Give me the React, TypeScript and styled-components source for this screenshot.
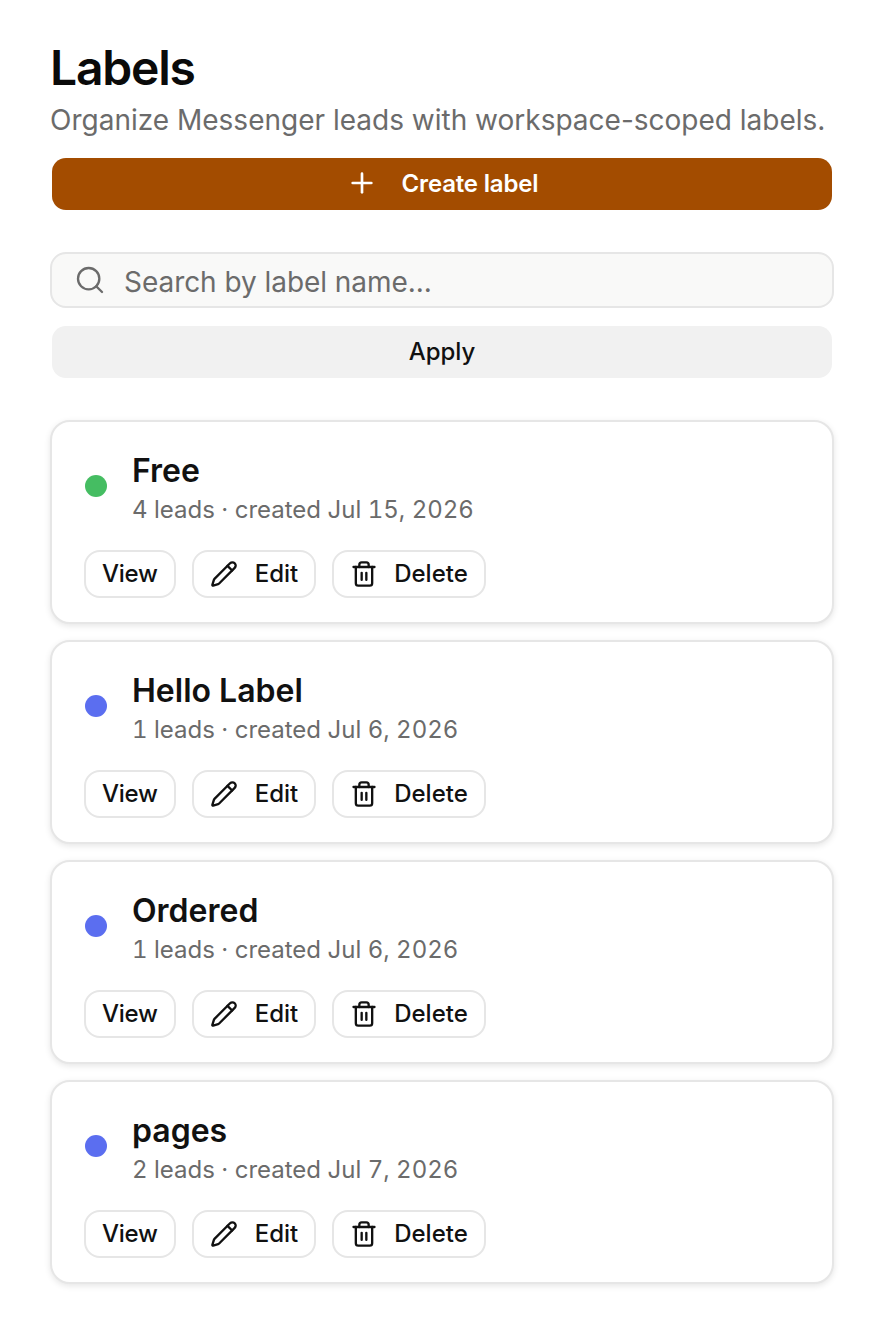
import React from "react";
import styled, { createGlobalStyle } from "styled-components";
import { Pencil, Plus, Search, Trash2 } from "lucide-react";

const GlobalStyle = createGlobalStyle`
  html, body {
    margin: 0;
    padding: 0;
    background: #fff;
    font-family: Inter, "Liberation Sans", sans-serif;
  }
  * { box-sizing: border-box; }
`;

const labels = [
  { name: "Free", color: "#45bd62", meta: "4 leads · created Jul 15, 2026" },
  { name: "Hello Label", color: "#5b6ef0", meta: "1 leads · created Jul 6, 2026" },
  { name: "Ordered", color: "#5b6ef0", meta: "1 leads · created Jul 6, 2026" },
  { name: "pages", color: "#5b6ef0", meta: "2 leads · created Jul 7, 2026" },
];

const Page = styled.main`
  width: 884px;
  padding: 40px 50px 48px;
`;

const Title = styled.h1`
  margin: 0;
  font-size: 48px;
  line-height: 56px;
  font-weight: 600;
  letter-spacing: -1.2px;
  color: #0a0a0a;
`;

const Subtitle = styled.p`
  margin: 4px 0 0;
  font-size: 28px;
  line-height: 40px;
  color: #6b6b6b;
`;

const PrimaryButton = styled.button`
  display: flex;
  align-items: center;
  justify-content: center;
  gap: 24px;
  width: 780px;
  height: 52px;
  margin: 18px 2px 0;
  padding: 0 0 2px;
  border: 0;
  border-radius: 14px;
  background: #a34c00;
  color: #fff;
  font: 600 24px Inter, sans-serif;
  letter-spacing: -0.17px;
`;

const SearchBox = styled.label`
  display: flex;
  align-items: center;
  gap: 18px;
  height: 56px;
  margin-top: 42px;
  padding: 0 22px;
  border: 2px solid #e6e6e6;
  border-radius: 16px;
  background: #f9f9f8;
  color: #6b6b6b;
`;

const SearchInput = styled.input`
  flex: 1;
  min-width: 0;
  border: 0;
  outline: 0;
  padding: 4px 0 0;
  background: transparent;
  font: 400 28px Inter, sans-serif;
  letter-spacing: -0.05px;
  color: #0a0a0a;
  &::placeholder {
    color: #6b6b6b;
    opacity: 1;
  }
`;

const ApplyButton = styled.button`
  display: block;
  width: 780px;
  height: 52px;
  margin: 18px 2px 0;
  padding: 0 0 2px;
  border: 0;
  border-radius: 14px;
  background: #f1f1f1;
  color: #111;
  font: 500 24px Inter, sans-serif;
`;

const CardList = styled.section`
  display: flex;
  flex-direction: column;
  gap: 16px;
  margin-top: 42px;
`;

const Card = styled.article`
  height: 204px;
  padding: 31px 32px 0;
  border: 2px solid #e6e6e6;
  border-radius: 20px;
  background: #fff;
  box-shadow: 0 2px 6px rgba(0, 0, 0, 0.1);
`;

const CardHead = styled.div`
  display: flex;
  align-items: flex-start;
  gap: 25px;
`;

const Dot = styled.span<{ $color: string }>`
  width: 22px;
  height: 22px;
  margin: 22px 0 0 1px;
  border-radius: 50%;
  background: ${(p) => p.$color};
`;

const Name = styled.h2`
  margin: 0;
  font-size: 32px;
  line-height: 36px;
  font-weight: 600;
  color: #111;
`;

const Meta = styled.p`
  margin: 3px 0 0;
  font-size: 24px;
  line-height: 36px;
  font-variant-numeric: tabular-nums;
  color: #6b6b6b;
`;

const Actions = styled.div`
  display: flex;
  gap: 16px;
  margin-top: 22px;
`;

const ActionButton = styled.button`
  display: flex;
  align-items: center;
  gap: 16px;
  height: 48px;
  padding: 0 16px 2px;
  border: 2px solid #e6e6e6;
  border-radius: 16px;
  background: #fff;
  color: #111;
  font: 500 24px Inter, sans-serif;
`;

const ViewButton = styled(ActionButton)`
  letter-spacing: -0.25px;
`;

const EditIcon = styled(Pencil)`
  margin: 2px 1px 0 0;
`;

const DeleteIcon = styled(Trash2)`
  margin-top: 2px;
`;

export default function App() {
  return (
    <Page>
      <GlobalStyle />
      <Title>Labels</Title>
      <Subtitle>Organize Messenger leads with workspace-scoped labels.</Subtitle>
      <PrimaryButton>
        <Plus size={32} strokeWidth={2} />
        Create label
      </PrimaryButton>
      <SearchBox>
        <Search size={32} strokeWidth={1.75} />
        <SearchInput placeholder="Search by label name..." />
      </SearchBox>
      <ApplyButton>Apply</ApplyButton>
      <CardList>
        {labels.map((label) => (
          <Card key={label.name}>
            <CardHead>
              <Dot $color={label.color} />
              <div>
                <Name>{label.name}</Name>
                <Meta>{label.meta}</Meta>
              </div>
            </CardHead>
            <Actions>
              <ViewButton>View</ViewButton>
              <ActionButton>
                <EditIcon size={28} strokeWidth={2} />
                Edit
              </ActionButton>
              <ActionButton>
                <DeleteIcon size={28} strokeWidth={2} />
                Delete
              </ActionButton>
            </Actions>
          </Card>
        ))}
      </CardList>
    </Page>
  );
}
